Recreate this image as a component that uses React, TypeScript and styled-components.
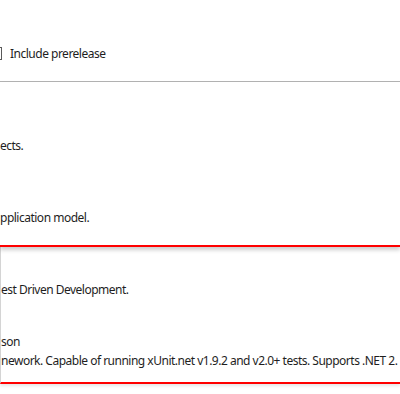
import React from "react";
import styled, { createGlobalStyle } from "styled-components";

const Global = createGlobalStyle`
  html, body { margin: 0; padding: 0; background: #ffffff; }
  body { width: 400px; height: 394px; overflow: hidden; }
`;

const Page = styled.div`
  width: 400px;
  height: 394px;
  overflow: hidden;
  background: #fff;
  font-family: "Segoe UI", "Noto Sans", sans-serif;
  font-size: 12px;
  letter-spacing: -0.5px;
  color: #1e1e1e;
  display: flex;
  flex-direction: column;
`;

const Toolbar = styled.div`
  height: 82px;
  display: flex;
  align-items: center;
  padding-top: 26px;
  box-sizing: border-box;
  border-bottom: 1px solid #b3b3b3;
`;

const CheckRow = styled.label`
  display: flex;
  align-items: center;
  gap: 8px;
  margin-left: -11px;
`;

const Box = styled.span`
  width: 11px;
  height: 11px;
  border: 1px solid #5a5a5a;
  background: #fff;
  display: inline-block;
`;

const CheckText = styled.span`
  line-height: 16px;
  white-space: nowrap;
`;

const Group = styled.div<{ $height: number; $framed?: boolean; $top?: boolean }>`
  height: ${(p) => p.$height}px;
  box-sizing: border-box;
  display: flex;
  flex-direction: column;
  border-bottom: 2px solid #ff0000;
  border-left: ${(p) => (p.$framed ? "1px solid #d4d4d4" : "none")};
  box-shadow: ${(p) => (p.$top ? "0 3px 4px rgba(0, 0, 0, 0.2)" : "0 2px 3px rgba(0, 0, 0, 0.1)")};
  position: relative;
  z-index: ${(p) => (p.$top ? 2 : 1)};
  background: #fff;
`;

const Line = styled.div<{ $gap: number }>`
  margin-top: ${(p) => p.$gap}px;
  height: 16px;
  line-height: 16px;
  white-space: nowrap;
  overflow: hidden;
`;

export default function App() {
  return (
    <Page>
      <Global />
      <Toolbar>
        <CheckRow>
          <Box />
          <CheckText>Include prerelease</CheckText>
        </CheckRow>
      </Toolbar>
      <Group $height={165} $top>
        <Line $gap={56}>ects.</Line>
        <Line $gap={56}>pplication model.</Line>
      </Group>
      <Group $height={137} $framed>
        <Line $gap={35}>est Driven Development.</Line>
        <Line $gap={36}>son</Line>
        <Line $gap={3}>
          nework. Capable of running xUnit.net v1.9.2 and v2.0+ tests. Supports .NET 2.
        </Line>
      </Group>
    </Page>
  );
}
